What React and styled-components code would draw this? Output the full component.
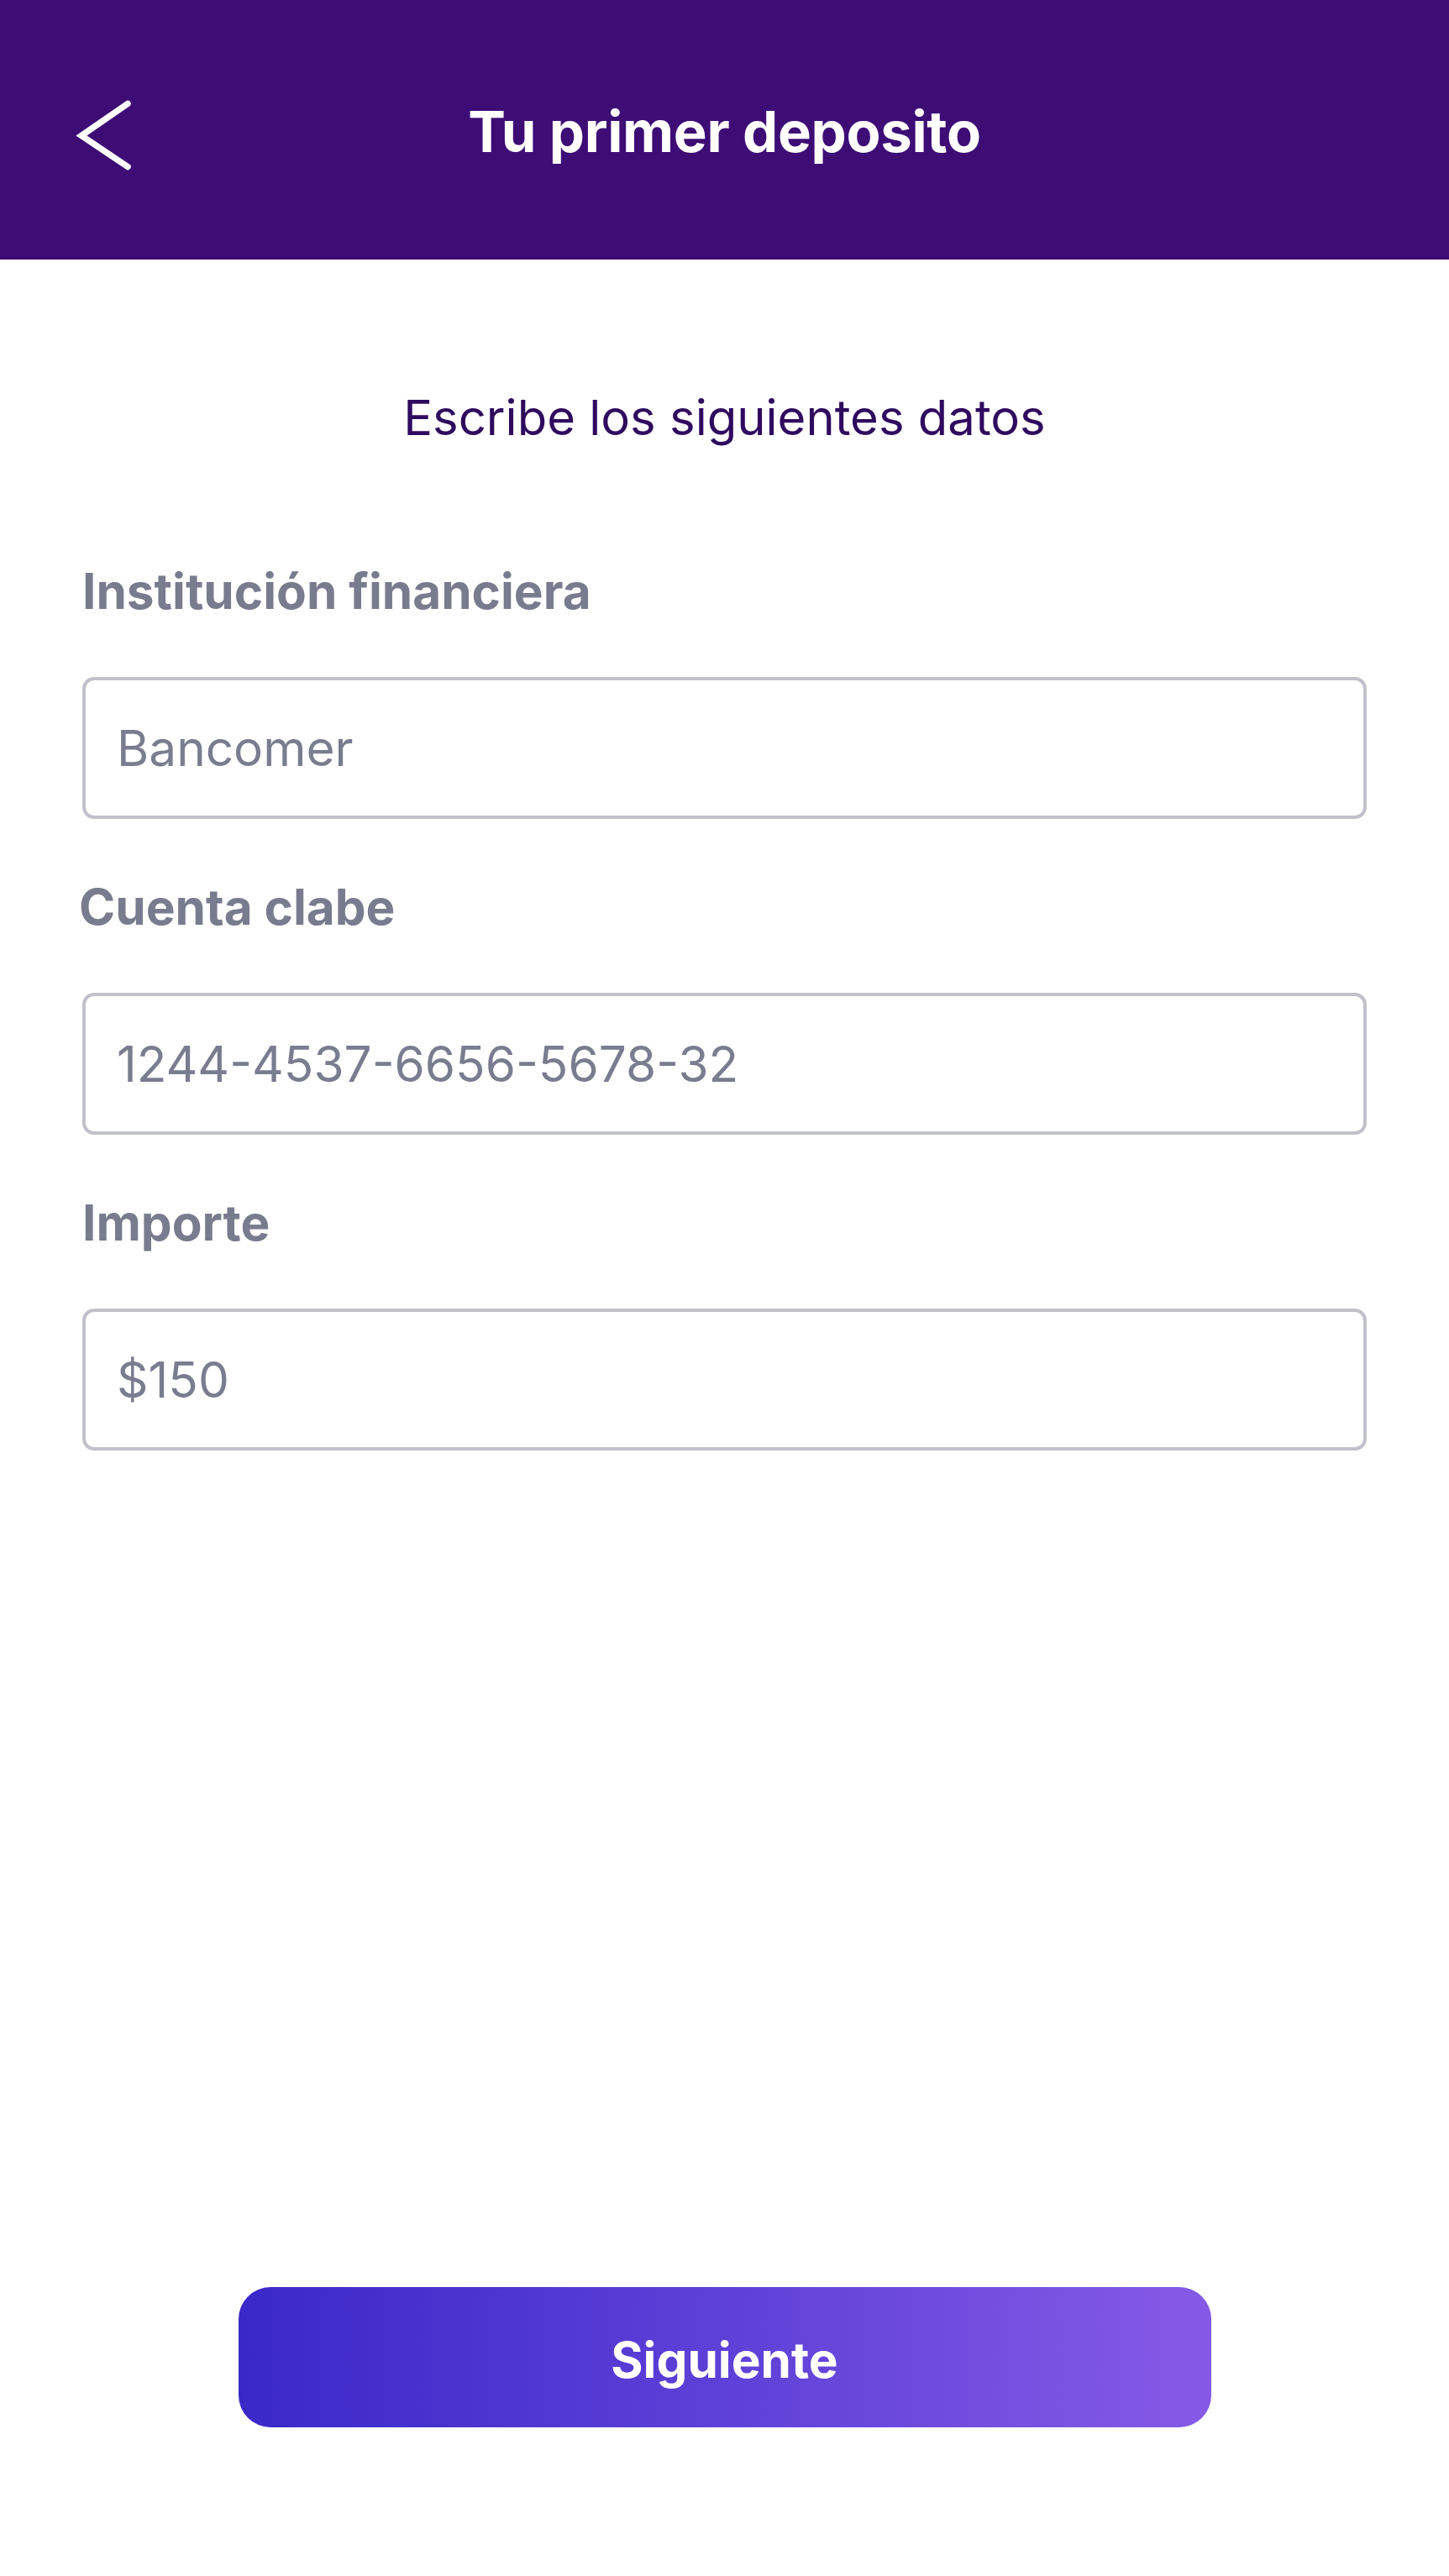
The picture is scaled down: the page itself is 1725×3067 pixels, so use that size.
import React from "react";
import styled, { createGlobalStyle } from "styled-components";

const Global = createGlobalStyle`
  html, body { margin: 0; padding: 0; background: #ffffff; }
  body { font-family: Inter, "Noto Sans", "Liberation Sans", sans-serif; }
  * { box-sizing: border-box; }
`;

const Page = styled.div`
  width: 1725px;
  min-height: 3067px;
  background: #ffffff;
  display: flex;
  flex-direction: column;
`;

const Header = styled.header`
  height: 309px;
  background: #3d0c75;
  display: grid;
  grid-template-columns: 1fr auto 1fr;
  align-items: center;
`;

const BackButton = styled.button`
  justify-self: start;
  margin-left: 90px;
  padding: 0;
  border: 0;
  background: transparent;
  display: flex;
  cursor: pointer;
`;

const Title = styled.h1`
  margin: 6px 0 0;
  font-size: 67px;
  line-height: 1.2;
  font-weight: 700;
  color: #ffffff;
  letter-spacing: -0.3px;
`;

const Subtitle = styled.p`
  margin: 154px 0 0;
  text-align: center;
  font-size: 58px;
  line-height: 1.2;
  font-weight: 400;
  color: #2f0a5e;
`;

const Form = styled.form`
  margin-top: 136px;
  padding: 0 98px;
  display: flex;
  flex-direction: column;
  gap: 70px;
`;

const Field = styled.div`
  display: flex;
  flex-direction: column;
  gap: 67px;
`;

const Label = styled.label`
  font-size: 58.5px;
  line-height: 1.2;
  font-weight: 700;
  color: #797b8e;
  margin-left: ${(p) => p.$shift || 0}px;
`;

const Input = styled.div`
  height: 169px;
  border: 4px solid #c1c1cc;
  border-radius: 14px;
  padding: 0 37px;
  display: flex;
  align-items: center;
  font-size: 58.5px;
  font-weight: 400;
  color: #7a7c8f;
`;

const Footer = styled.div`
  margin-top: auto;
  padding-bottom: 177px;
  display: flex;
  justify-content: center;
`;

const PrimaryButton = styled.button`
  width: 1158px;
  height: 167px;
  border: 0;
  border-radius: 38px;
  padding: 6px 0 0;
  background: linear-gradient(90deg, #3a28c8 0%, #5a3ed6 45%, #865ae6 100%);
  color: #ffffff;
  font-family: inherit;
  font-size: 58.5px;
  font-weight: 700;
  cursor: pointer;
`;

const ChevronLeft = () => (
  <svg width="70" height="100" viewBox="0 0 70 100" fill="none">
    <path
      d="M62 18.5 L7 56.5 L62 93.5"
      stroke="#ffffff"
      strokeWidth="7.5"
      strokeLinecap="round"
      strokeLinejoin="miter"
    />
  </svg>
);

const fields = [
  { label: "Institución financiera", value: "Bancomer", shift: 0 },
  { label: "Cuenta clabe", value: "1244-4537-6656-5678-32", shift: -4 },
  { label: "Importe", value: "$150", shift: 0 },
];

export default function App() {
  return (
    <Page>
      <Global />
      <Header>
        <BackButton aria-label="Volver">
          <ChevronLeft />
        </BackButton>
        <Title>Tu primer deposito</Title>
        <span />
      </Header>
      <Subtitle>Escribe los siguientes datos</Subtitle>
      <Form>
        {fields.map((f) => (
          <Field key={f.label}>
            <Label $shift={f.shift}>{f.label}</Label>
            <Input>{f.value}</Input>
          </Field>
        ))}
      </Form>
      <Footer>
        <PrimaryButton type="button">Siguiente</PrimaryButton>
      </Footer>
    </Page>
  );
}
